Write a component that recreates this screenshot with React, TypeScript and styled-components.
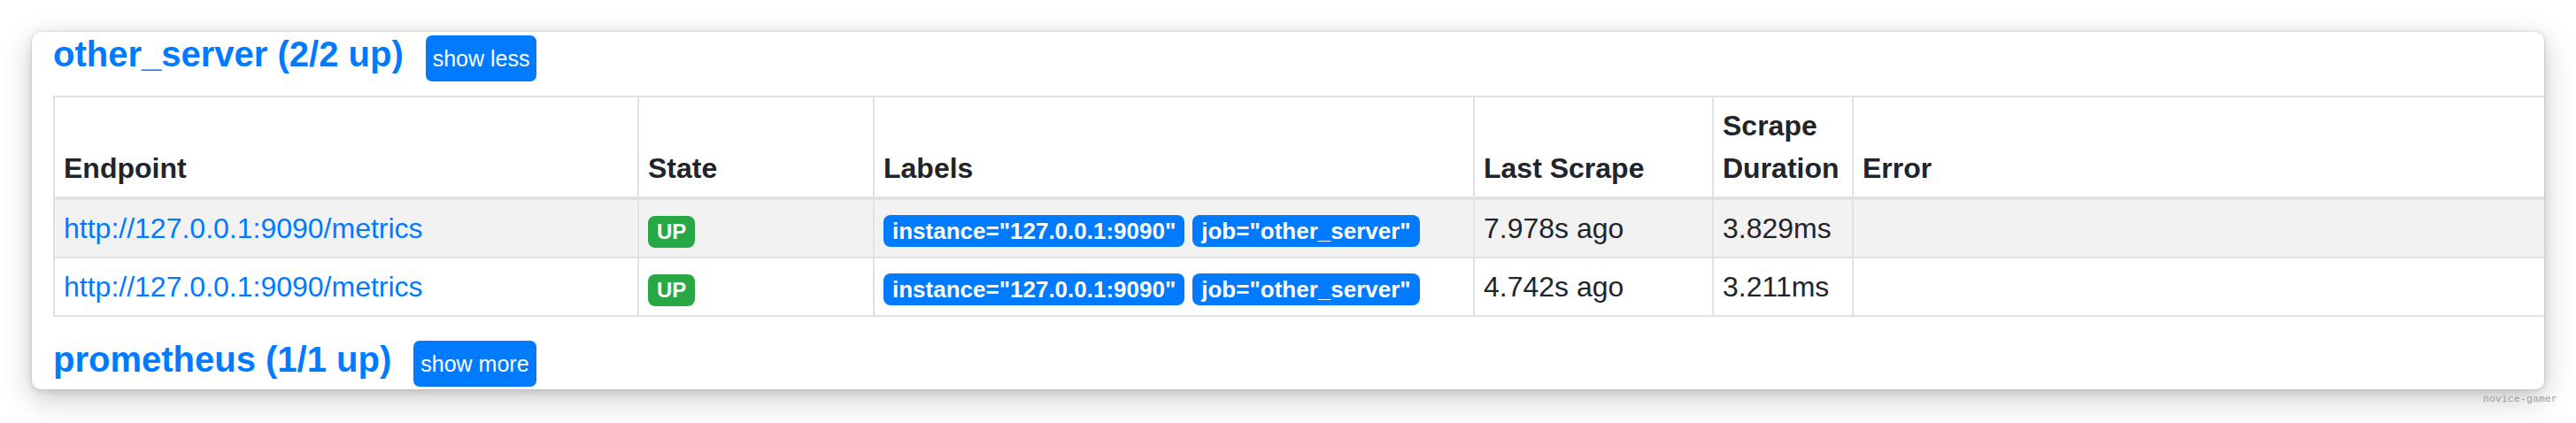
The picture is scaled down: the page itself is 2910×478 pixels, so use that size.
import React from "react";
import styled, { createGlobalStyle } from "styled-components";

const GlobalStyle = createGlobalStyle`
  html, body {
    margin: 0;
    padding: 0;
    background: #ffffff;
  }
  body {
    font-family: "Liberation Sans", Arial, Helvetica, sans-serif;
    color: #212529;
  }
`;

const Page = styled.div`
  position: relative;
  width: 2910px;
  height: 478px;
  box-sizing: border-box;
  padding: 36px 36px 0;
  overflow: hidden;
  background: #ffffff;
`;

const Window = styled.div`
  background: #ffffff;
  border-radius: 10px;
  overflow: hidden;
  padding: 1px 0 3px 24px;
  box-shadow: 0 0 0 1px rgba(0, 0, 0, 0.05), 0 2px 8px rgba(0, 0, 0, 0.12),
    0 10px 34px rgba(0, 0, 0, 0.22);
`;

const PoolHeader = styled.div<{ $spaced?: boolean }>`
  display: flex;
  align-items: baseline;
  gap: 25px;
  margin-top: ${(p) => (p.$spaced ? "24px" : "0")};
`;

const PoolTitle = styled.a`
  font-size: 40px;
  line-height: 48px;
  font-weight: 700;
  color: #007bff;
  text-decoration: none;
  white-space: nowrap;
`;

const ToggleButton = styled.button`
  font-family: "Liberation Sans", Arial, Helvetica, sans-serif;
  font-size: 25px;
  line-height: 52px;
  height: 52px;
  padding: 0 8px;
  border: none;
  border-radius: 7px;
  background: #007bff;
  color: #ffffff;
  cursor: pointer;
  white-space: nowrap;
`;

const Table = styled.table`
  width: 100%;
  margin-top: 16px;
  border-collapse: separate;
  border-spacing: 0;
  table-layout: fixed;
  border-top: 2px solid #dee2e6;
  font-size: 32px;
  line-height: 48px;
`;

const Col = styled.col<{ $w?: number }>`
  width: ${(p) => (p.$w ? `${p.$w}px` : "auto")};
`;

const HeadCell = styled.th`
  text-align: left;
  vertical-align: bottom;
  font-weight: 700;
  padding: 8px 10px;
  border-left: 2px solid #dee2e6;
  border-bottom: 4px solid #dee2e6;
  color: #212529;
`;

const Row = styled.tr<{ $striped?: boolean }>`
  background: ${(p) => (p.$striped ? "#f2f2f2" : "#ffffff")};
`;

const Cell = styled.td`
  vertical-align: top;
  padding: 8px 10px;
  border-left: 2px solid #dee2e6;
  border-bottom: 2px solid #dee2e6;
  color: #212529;
  white-space: nowrap;
`;

const EndpointLink = styled.a`
  color: #007bff;
  text-decoration: none;
`;

const Badge = styled.span<{ $tone: "success" | "primary"; $size: number; $pad: number }>`
  display: inline-block;
  vertical-align: -1px;
  font-size: ${(p) => p.$size}px;
  line-height: 1;
  font-weight: 700;
  padding: ${(p) => p.$pad}px 10px;
  border-radius: 8px;
  color: #ffffff;
  background: ${(p) => (p.$tone === "success" ? "#28a745" : "#007bff")};
  margin-right: 9px;
  white-space: nowrap;
`;

const Watermark = styled.span`
  position: absolute;
  right: 21px;
  top: 444px;
  font-family: "Liberation Mono", "DejaVu Sans Mono", monospace;
  font-size: 11.5px;
  line-height: 14px;
  color: #9c9c9c;
  letter-spacing: 0.1px;
`;

type Target = {
  endpoint: string;
  labels: string[];
  lastScrape: string;
  duration: string;
};

const targets: Target[] = [
  {
    endpoint: "http://127.0.0.1:9090/metrics",
    labels: ['instance="127.0.0.1:9090"', 'job="other_server"'],
    lastScrape: "7.978s ago",
    duration: "3.829ms",
  },
  {
    endpoint: "http://127.0.0.1:9090/metrics",
    labels: ['instance="127.0.0.1:9090"', 'job="other_server"'],
    lastScrape: "4.742s ago",
    duration: "3.211ms",
  },
];

export default function App() {
  return (
    <>
      <GlobalStyle />
      <Page>
        <Window>
          <PoolHeader>
            <PoolTitle href="#other_server">other_server (2/2 up)</PoolTitle>
            <ToggleButton>show less</ToggleButton>
          </PoolHeader>
          <Table>
            <colgroup>
              <Col $w={660} />
              <Col $w={266} />
              <Col $w={678} />
              <Col $w={270} />
              <Col $w={158} />
              <Col />
            </colgroup>
            <thead>
              <tr>
                <HeadCell>Endpoint</HeadCell>
                <HeadCell>State</HeadCell>
                <HeadCell>Labels</HeadCell>
                <HeadCell>Last Scrape</HeadCell>
                <HeadCell>Scrape Duration</HeadCell>
                <HeadCell>Error</HeadCell>
              </tr>
            </thead>
            <tbody>
              {targets.map((t, i) => (
                <Row key={i} $striped={i % 2 === 0}>
                  <Cell>
                    <EndpointLink href={t.endpoint}>{t.endpoint}</EndpointLink>
                  </Cell>
                  <Cell>
                    <Badge $tone="success" $size={24} $pad={6}>
                      UP
                    </Badge>
                  </Cell>
                  <Cell>
                    {t.labels.map((l) => (
                      <Badge key={l} $tone="primary" $size={26} $pad={5}>
                        {l}
                      </Badge>
                    ))}
                  </Cell>
                  <Cell>{t.lastScrape}</Cell>
                  <Cell>{t.duration}</Cell>
                  <Cell />
                </Row>
              ))}
            </tbody>
          </Table>
          <PoolHeader $spaced>
            <PoolTitle href="#prometheus">prometheus (1/1 up)</PoolTitle>
            <ToggleButton>show more</ToggleButton>
          </PoolHeader>
        </Window>
        <Watermark>novice-gamer</Watermark>
      </Page>
    </>
  );
}
